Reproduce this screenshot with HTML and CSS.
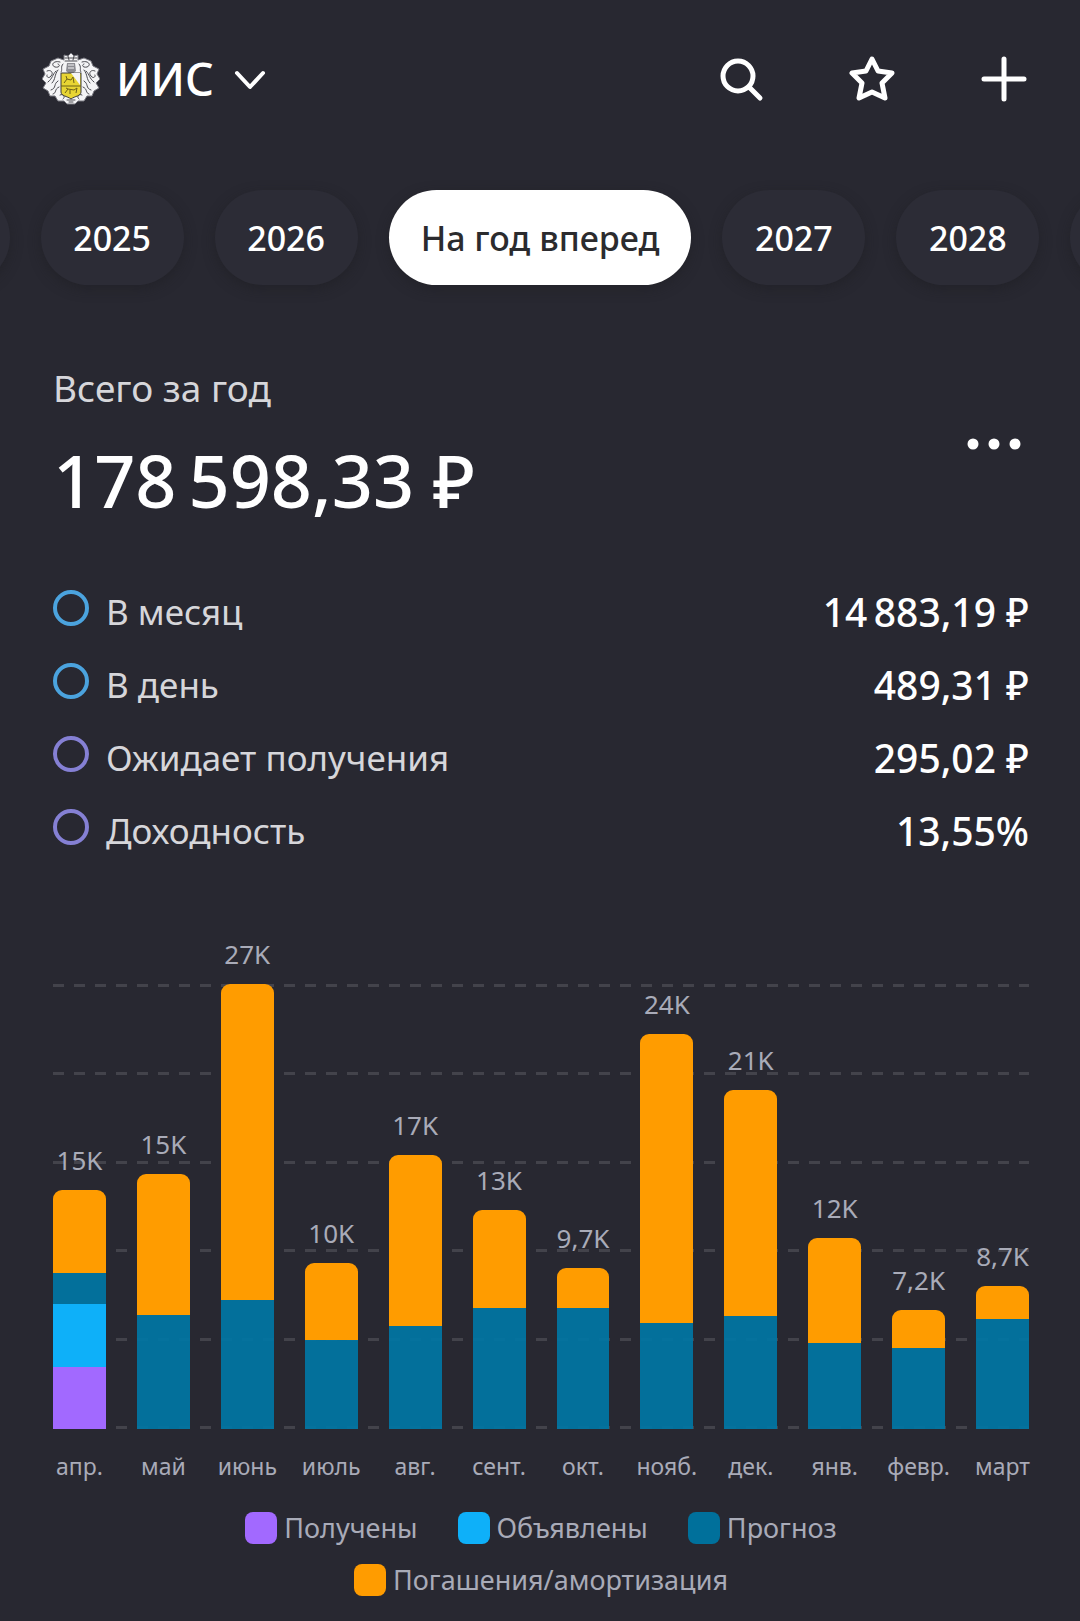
FILE: index.html
```html
<!DOCTYPE html>
<html lang="ru">

<head>
    <meta charset="utf-8">
    <title>ИИС</title>
    <meta name="viewport" content="width=device-width, initial-scale=1">
    <link rel="stylesheet" href="styles.css">
</head>

<body>
    <header class="topbar">
        <button class="account" type="button">
            <svg class="emblem" viewBox="0 0 58 52" aria-hidden="true">
                <!-- mantling -->
                <path d="M22 7 L22 2 L26 3 L29 0 L32 3 L36 2 L36 7 L42 5 L49 8 L51 13 L57 16 L55 21 L58 26 L54 30 L57 35 L52 38 L50 43 L45 43 L42 48 L36 48 L33 51 L25 51 L22 48 L16 48 L13 43 L8 43 L6 38 L1 35 L4 30 L0 26 L3 21 L1 16 L7 13 L9 8 L16 5 Z" fill="#f4f4f6" stroke="#77777f" stroke-width="1" stroke-linejoin="round" />
                <g fill="none" stroke="#4a4a50" stroke-width="1" stroke-linecap="round">
                    <path d="M23 5 L35 5 M23 8 L35 8 M26 3 L27 7 M32 3 L31 7" />
                    <path d="M18 9 C12 7 8 12 13 14 C17 15 19 12 16 11 M40 9 C46 7 50 12 45 14 C41 15 39 12 42 11" />
                    <path d="M5 18 C9 16 12 20 9 23 C7 26 4 24 5 22 M53 18 C49 16 46 20 49 23 C51 26 54 24 53 22" />
                    <path d="M16 17 C12 22 14 26 10 30 M14 18 C10 22 11 25 6 29 M42 17 C46 22 44 26 48 30 M44 18 C48 22 47 25 52 29" />
                    <path d="M16 28 C11 31 15 35 9 37 M17 34 C12 36 15 40 11 41 M42 28 C47 31 43 35 49 37 M41 34 C46 36 43 40 47 41" />
                    <path d="M18 42 C21 40 24 44 21 46 M40 42 C37 40 34 44 37 46 M25 47 L33 47 M27 49 L31 49" />
                    <path d="M21 11 C18 14 21 17 19 19 M37 11 C40 14 37 17 39 19" />
                </g>
                <path d="M25 10 L33 10 L34 18 L29 22 L24 18 Z" fill="#8c8c92" />
                <path d="M26 12 L32 12 M26 15 L32 15" stroke="#f4f4f6" />
                <!-- shield -->
                <path d="M19 20 L39 20 L39 39 C39 43 33 43 29 46 C25 43 19 43 19 39 Z" fill="#e8d533" stroke="#3c3c3c" stroke-width="1" />
                <path d="M29 20 L38 20 L38 32 Z" fill="#f4f4f6" />
                <path d="M19 33 L39 33" stroke="#6d6216" />
                <path d="M22 30 L25 26 L29 27 L31 24 L32 30 M25 26 L24 23 M23 40 L26 36 L32 37 L35 35 L34 40 M26 36 L24 35 M28 37 L28 41" fill="none" stroke="#6d6216" stroke-width="1" />
            </svg>
            <span class="account-name">ИИС</span>
            <svg class="chevron" viewBox="0 0 32 24" aria-hidden="true">
                <path d="M3 6 L16 20 L29 6" />
            </svg>
        </button>
        <div class="actions">
            <button class="icon-button" type="button" aria-label="Поиск">
                <svg viewBox="0 0 48 48">
                    <circle cx="20" cy="21" r="15" stroke-width="5" />
                    <path d="M31 32 L42 43" stroke-width="5" />
                </svg>
            </button>
            <button class="icon-button" type="button" aria-label="Избранное">
                <svg viewBox="0 0 48 48">
                    <path d="M23 4 L29 16 L43 18 L33 28 L36 43 L23 37 L10 43 L13 28 L3 18 L17 16 Z" stroke-width="5" />
                </svg>
            </button>
            <button class="icon-button" type="button" aria-label="Добавить">
                <svg viewBox="0 0 48 48">
                    <path d="M24 4 L24 44 M4 24 L44 24" stroke-width="5" />
                </svg>
            </button>
        </div>
    </header>

    <nav class="periods">
        <button class="chip" type="button" aria-label="Раньше"></button>
        <button class="chip" type="button">2025</button>
        <button class="chip" type="button">2026</button>
        <button class="chip active" type="button">На год вперед</button>
        <button class="chip" type="button">2027</button>
        <button class="chip" type="button">2028</button>
        <button class="chip" type="button" aria-label="Позже"></button>
    </nav>

    <main class="content">
        <section class="summary">
            <div>
                <h2>Всего за год</h2>
                <p class="total">178&#8201;598,33 ₽</p>
            </div>
            <button class="more" type="button" aria-label="Ещё">
                <svg viewBox="0 0 54 12">
                    <circle cx="6" cy="6" r="5.5" />
                    <circle cx="27" cy="6" r="5.5" />
                    <circle cx="48" cy="6" r="5.5" />
                </svg>
            </button>
        </section>

        <dl class="stats">
            <div class="stat blue">
                <dt>В месяц</dt>
                <dd>14&#8201;883,19 ₽</dd>
            </div>
            <div class="stat blue">
                <dt>В день</dt>
                <dd>489,31 ₽</dd>
            </div>
            <div class="stat violet">
                <dt>Ожидает получения</dt>
                <dd>295,02 ₽</dd>
            </div>
            <div class="stat violet">
                <dt>Доходность</dt>
                <dd>13,55%</dd>
            </div>
        </dl>

        <section class="chart">
            <!-- bar heights are a share of the highest month -->
            <div class="plot">
                <div class="lines"><i></i><i></i><i></i><i></i><i></i><i></i></div>
                <div class="bar">
                    <span class="value">15K</span>
                    <div class="part redeemed" style="height: 18.7%"></div>
                    <div class="part forecast" style="height: 7%"></div>
                    <div class="part declared" style="height: 14.2%"></div>
                    <div class="part received" style="height: 13.9%"></div>
                </div>
                <div class="bar">
                    <span class="value">15K</span>
                    <div class="part redeemed" style="height: 31.7%"></div>
                    <div class="part forecast" style="height: 25.6%"></div>
                </div>
                <div class="bar">
                    <span class="value">27K</span>
                    <div class="part redeemed" style="height: 71%"></div>
                    <div class="part forecast" style="height: 29%"></div>
                </div>
                <div class="bar">
                    <span class="value">10K</span>
                    <div class="part redeemed" style="height: 17.3%"></div>
                    <div class="part forecast" style="height: 20%"></div>
                </div>
                <div class="bar">
                    <span class="value">17K</span>
                    <div class="part redeemed" style="height: 38.4%"></div>
                    <div class="part forecast" style="height: 23.1%"></div>
                </div>
                <div class="bar">
                    <span class="value">13K</span>
                    <div class="part redeemed" style="height: 22%"></div>
                    <div class="part forecast" style="height: 27.2%"></div>
                </div>
                <div class="bar">
                    <span class="value">9,7K</span>
                    <div class="part redeemed" style="height: 9%"></div>
                    <div class="part forecast" style="height: 27.2%"></div>
                </div>
                <div class="bar">
                    <span class="value">24K</span>
                    <div class="part redeemed" style="height: 64.9%"></div>
                    <div class="part forecast" style="height: 23.8%"></div>
                </div>
                <div class="bar">
                    <span class="value">21K</span>
                    <div class="part redeemed" style="height: 50.8%"></div>
                    <div class="part forecast" style="height: 25.4%"></div>
                </div>
                <div class="bar">
                    <span class="value">12K</span>
                    <div class="part redeemed" style="height: 23.6%"></div>
                    <div class="part forecast" style="height: 19.3%"></div>
                </div>
                <div class="bar">
                    <span class="value">7,2K</span>
                    <div class="part redeemed" style="height: 8.5%"></div>
                    <div class="part forecast" style="height: 18.2%"></div>
                </div>
                <div class="bar">
                    <span class="value">8,7K</span>
                    <div class="part redeemed" style="height: 7.4%"></div>
                    <div class="part forecast" style="height: 24.7%"></div>
                </div>
            </div>

            <div class="months">
                <div><span>апр.</span></div>
                <div><span>май</span></div>
                <div><span>июнь</span></div>
                <div><span>июль</span></div>
                <div><span>авг.</span></div>
                <div><span>сент.</span></div>
                <div><span>окт.</span></div>
                <div><span>нояб.</span></div>
                <div><span>дек.</span></div>
                <div><span>янв.</span></div>
                <div><span>февр.</span></div>
                <div><span>март</span></div>
            </div>

            <ul class="legend">
                <li><i class="received"></i>Получены</li>
                <li><i class="declared"></i>Объявлены</li>
                <li><i class="forecast"></i>Прогноз</li>
                <li><i class="redeemed"></i>Погашения/амортизация</li>
            </ul>
        </section>
    </main>
</body>

</html>
```
FILE: styles.css
```css
*, *::before {
    box-sizing: border-box;
}

body {
    margin: 0;
    background-color: #282831;
    color: #fff;
    font-family: "Noto Sans", sans-serif;
    overflow-x: hidden;
}

button {
    padding: 0;
    border: none;
    background: none;
    color: inherit;
    font-family: inherit;
    cursor: pointer;
}

h2, p, dl, dd, ul {
    margin: 0;
    padding: 0;
}

/* Top bar */
.topbar {
    display: flex;
    justify-content: space-between;
    align-items: center;
    padding: 49px 52px 0 42px;
}

.account {
    display: flex;
    align-items: center;
    gap: 16px;
}

.account-name {
    font-size: 45px;
    line-height: 60px;
    font-weight: 500;
}

.emblem {
    width: 58px;
    height: 52px;
}

.chevron {
    width: 32px;
    height: 24px;
    margin-left: 4px;
}

.actions {
    display: flex;
    gap: 83px;
}

.icon-button svg {
    display: block;
    width: 48px;
    height: 48px;
}

.chevron, .icon-button svg {
    fill: none;
    stroke: #fff;
    stroke-width: 4px;
    stroke-linecap: round;
    stroke-linejoin: round;
}

/* Periods */
.periods {
    display: flex;
    justify-content: center;
    gap: 31px;
    padding: 81px 0 30px;
    overflow: hidden;
}

.chip {
    flex: none;
    min-width: 143px;
    height: 95px;
    padding: 0 32px;
    border-radius: 48px;
    background-color: #2c2c36;
    box-shadow: 0 4px 12px rgba(30, 30, 34, .5);
    font-size: 34px;
    font-weight: 500;
    white-space: nowrap;
}

.chip.active {
    background-color: #fff;
    color: #2b2b2e;
}

/* Totals */
.content {
    padding: 49px 51px 24px 53px;
}

.summary {
    display: flex;
    justify-content: space-between;
    align-items: center;
}

.summary h2 {
    margin-bottom: 24px;
    color: #d6d6da;
    font-size: 37px;
    line-height: 48px;
    font-weight: 400;
}

.total {
    font-size: 72px;
    line-height: 88px;
    font-weight: 500;
}

.more {
    padding: 16px 8px;
}

.more svg {
    display: block;
    width: 54px;
    height: 12px;
    fill: #fff;
}

.stats {
    display: grid;
    gap: 25px;
    margin-top: 64px;
}

.stat {
    display: flex;
    align-items: center;
    gap: 17px;
    line-height: 48px;
}

.stat::before {
    content: "";
    width: 36px;
    height: 36px;
    margin-bottom: 8px;
    border: 4px solid;
    border-radius: 50%;
}

.stat.blue::before {
    border-color: #4ba3de;
}

.stat.violet::before {
    border-color: #8580d4;
}

.stat dt {
    flex: 1;
    color: #d6d6da;
    font-size: 35px;
}

.stat dd {
    font-size: 39px;
    font-weight: 500;
}

/* Chart */
.chart {
    margin-top: 129px;
    color: #a9abb8;
}

.plot, .months {
    display: grid;
    grid-template-columns: repeat(12, minmax(0, 1fr));
    column-gap: 31px;
}

.plot {
    position: relative;
    height: 445px;
}

.lines {
    position: absolute;
    inset: 0;
    display: flex;
    flex-direction: column;
    justify-content: space-between;
}

.lines i {
    height: 3px;
    background: repeating-linear-gradient(to right, #43434b 0 11px, transparent 11px 21px);
}

.bar {
    position: relative;
    display: flex;
    flex-direction: column;
    justify-content: flex-end;
    align-items: center;
    height: 445px;
}

.value {
    margin-bottom: 12px;
    font-size: 26px;
    line-height: 36px;
}

.part {
    flex: none;
    width: 100%;
}

.part.redeemed {
    border-radius: 9px 9px 0 0;
}

.received {
    background-color: #a269ff;
}

.declared {
    background-color: #0eb0f9;
}

.forecast {
    background-color: #00709b;
}

.part.forecast {
    background-color: rgba(0, 118, 164, .92);
}

.redeemed {
    background-color: #ff9c00;
}

.months {
    margin-top: 21px;
    font-size: 23px;
    line-height: 32px;
}

.months div {
    display: flex;
    justify-content: center;
}

.legend {
    display: flex;
    flex-wrap: wrap;
    justify-content: center;
    gap: 12px 40px;
    margin-top: 26px;
    padding: 0 15%;
    font-size: 27px;
    line-height: 40px;
    list-style: none;
}

.legend li {
    display: flex;
    align-items: center;
    gap: 7px;
}

.legend i {
    width: 32px;
    height: 32px;
    border-radius: 8px;
}
```
